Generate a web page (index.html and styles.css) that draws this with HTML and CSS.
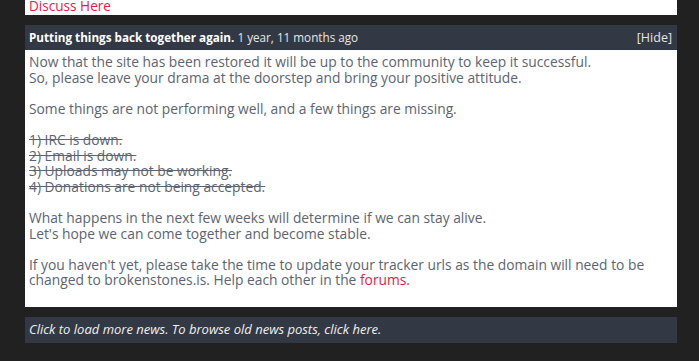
FILE: index.html
```html
<!DOCTYPE html>
<html lang="en">

<head>
    <meta charset="UTF-8">
    <meta name="viewport" content="width=device-width, initial-scale=1.0">
    <title>News</title>
    <link rel="stylesheet" href="styles.css">
</head>

<body>

    <div class="news-list">
        <!-- tail of the previous post -->
        <div class="news-item news-prev">
            <div class="news-body">
                <a href="#">Discuss Here</a>
            </div>
        </div>

        <div class="news-item">
            <div class="news-head">
                <span><strong>Putting things back together again.</strong> 1 year, 11 months ago</span>
                <a href="#" class="news-toggle">[Hide]</a>
            </div>
            <div class="news-body">
                Now that the site has been restored it will be up to the community to keep it successful.<br>
                So, please leave your drama at the doorstep and bring your positive attitude.<br>
                <br>
                Some things are not performing well, and a few things are missing.<br>
                <br>
                <s>1) IRC is down.</s><br>
                <s>2) Email is down.</s><br>
                <s>3) Uploads may not be working.</s><br>
                <s>4) Donations are not being accepted.</s><br>
                <br>
                What happens in the next few weeks will determine if we can stay alive.<br>
                Let's hope we can come together and become stable.<br>
                <br>
                If you haven't yet, please take the time to update your tracker urls as the domain will need to be
                changed to brokenstones.is. Help each other in the <a href="#">forums.</a><br>
                <br>
            </div>
        </div>

        <div class="news-more">
            <a href="#">Click to load more news. To browse old news posts, click here.</a>
        </div>
    </div>

</body>

</html>
```

FILE: styles.css
```css
/* Global Styles */
* {
    margin: 0;
    padding: 0;
    box-sizing: border-box;
}

body {
    font-family: 'Open Sans', sans-serif;
    font-size: 13.8px;
    line-height: 15.6px;
    background-color: #212121;
    color: #5c6473;
}

a {
    color: #e8194b;
    text-decoration: none;
}

/* News list */
.news-list {
    width: 652px;
    margin-left: 25px;
    display: flex;
    flex-direction: column;
    gap: 10px;
}

.news-item {
    background-color: #fff;
}

.news-prev {
    height: 15px;
    overflow: hidden;
}

.news-prev .news-body {
    margin-top: -2px;
    padding-top: 0;
    font-size: 13.6px;
}

.news-head {
    display: flex;
    justify-content: space-between;
    align-items: center;
    height: 25px;
    padding: 0 5px 0 4px;
    background-color: #333944;
    color: #e6e6e6;
    font-size: 11.7px;
}

.news-head strong {
    color: #fff;
}

.news-toggle {
    color: #e6e6e6;
    font-size: 12.5px;
}

.news-body {
    padding: 4px 4px 3px 4px;
}

.news-more {
    height: 26px;
    padding: 0 4px;
    display: flex;
    align-items: center;
    background-color: #333944;
    font-style: italic;
    font-size: 13px;
}

.news-more a {
    color: #f0f0f0;
}
```
